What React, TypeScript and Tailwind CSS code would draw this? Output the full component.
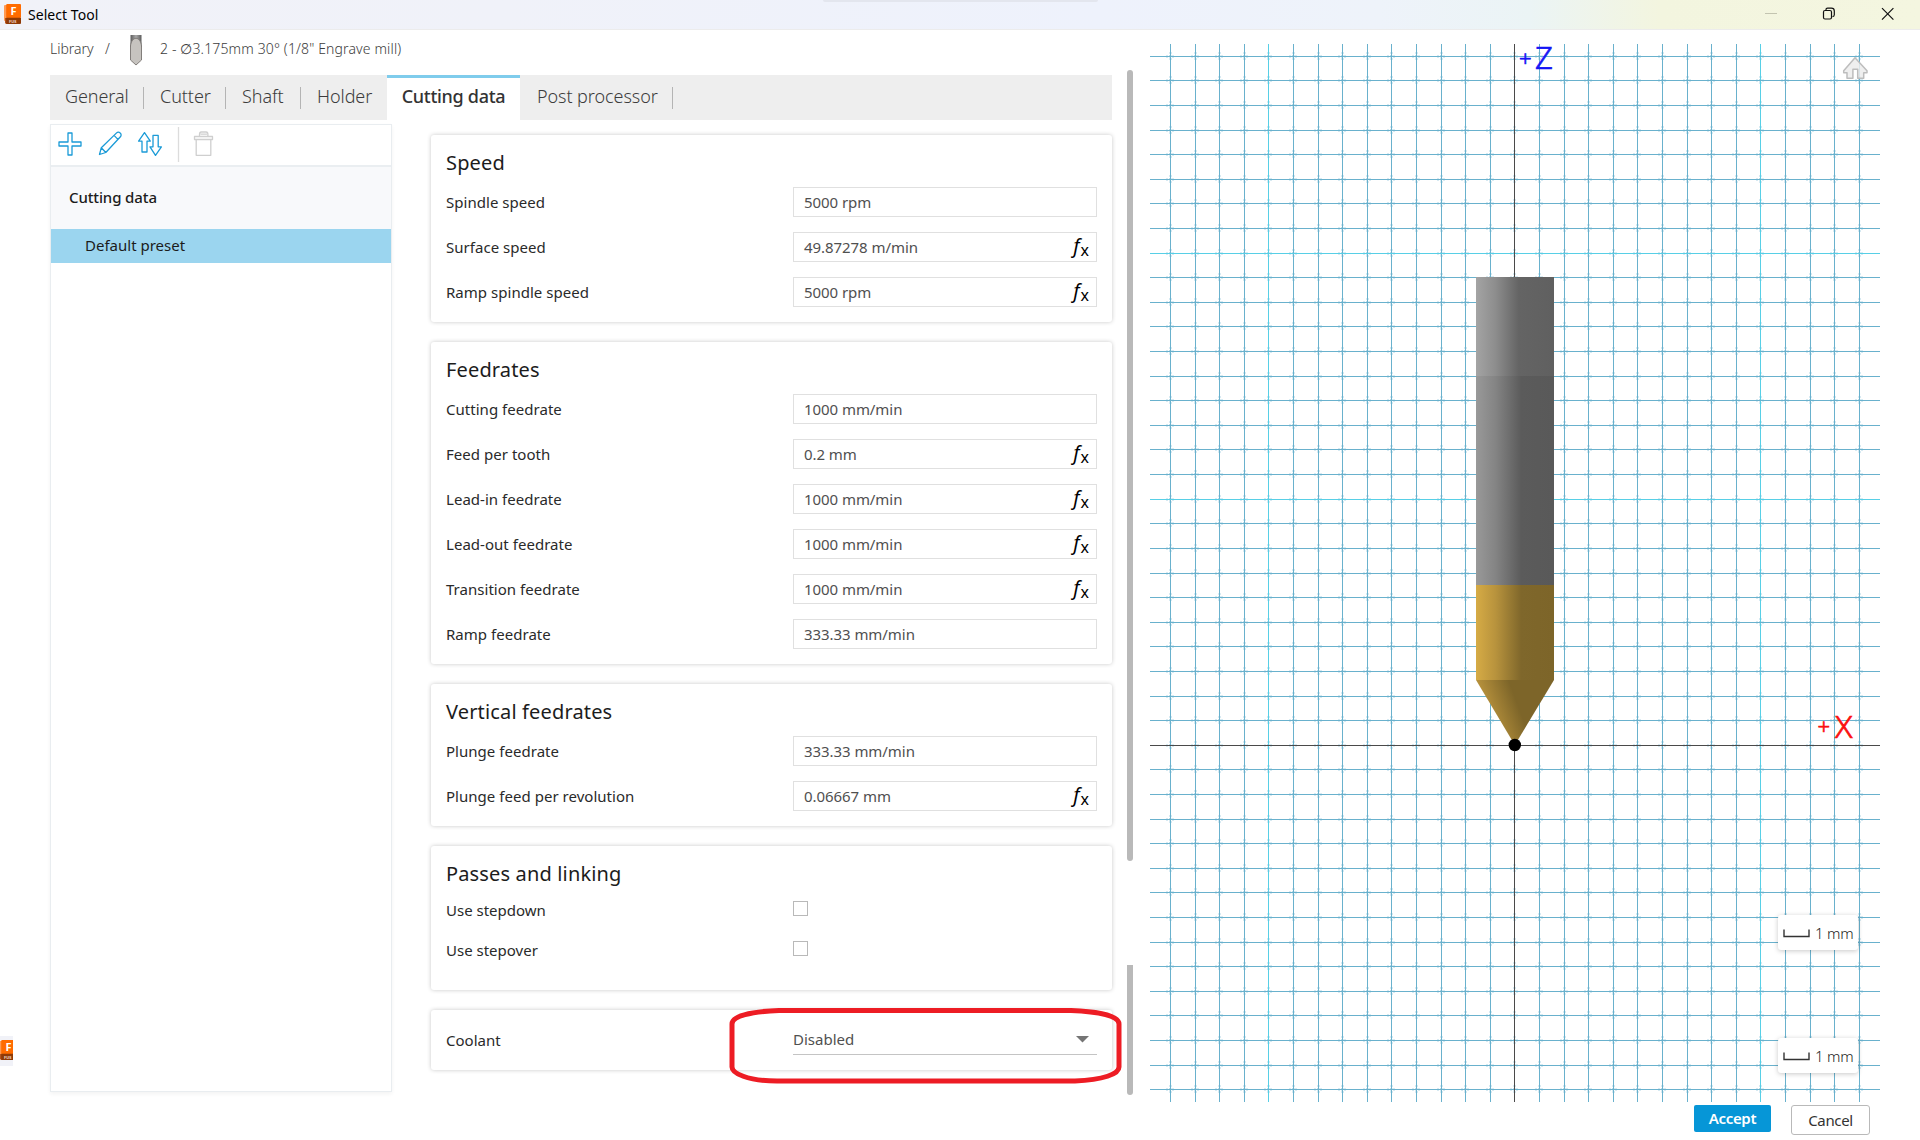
import React from 'react';

type Field = { label: string; value: string; fx?: boolean };

const speed: Field[] = [
  { label: 'Spindle speed', value: '5000 rpm' },
  { label: 'Surface speed', value: '49.87278 m/min', fx: true },
  { label: 'Ramp spindle speed', value: '5000 rpm', fx: true },
];

const feedrates: Field[] = [
  { label: 'Cutting feedrate', value: '1000 mm/min' },
  { label: 'Feed per tooth', value: '0.2 mm', fx: true },
  { label: 'Lead-in feedrate', value: '1000 mm/min', fx: true },
  { label: 'Lead-out feedrate', value: '1000 mm/min', fx: true },
  { label: 'Transition feedrate', value: '1000 mm/min', fx: true },
  { label: 'Ramp feedrate', value: '333.33 mm/min' },
];

const vertical: Field[] = [
  { label: 'Plunge feedrate', value: '333.33 mm/min' },
  { label: 'Plunge feed per revolution', value: '0.06667 mm', fx: true },
];

function Logo() {
  return (
    <svg width="18" height="20" viewBox="0 0 18 20" className="shrink-0">
      <rect x="0" y="1" width="6" height="16" rx="1" fill="#ff9a52" />
      <path d="M1 14h4v6H2l-1-1z" fill="#b5521a" />
      <rect x="2.2" y="0" width="14.8" height="14" rx="1" fill="#ff6b00" />
      <path d="M2.2 13.8H17V19a1 1 0 0 1-1 1H3.2a1 1 0 0 1-1-1z" fill="#8f3a06" />
      <text x="6.4" y="11.2" fontSize="11" fontWeight="700" fill="#fff" fontFamily="Noto Sans">F</text>
      <text x="5" y="18.6" fontSize="4" fontWeight="700" fill="#f0d8c8" fontFamily="Noto Sans">FUS</text>
    </svg>
  );
}

function TitleBar() {
  return (
    <header className="relative flex h-[30px] shrink-0 items-center bg-[linear-gradient(90deg,#f1f2f8_0px,#f0f2f9_500px,#eef2fc_1100px,#eef3fa_1380px,#ebf4f5_1530px,#f3f5df_1660px,#f4f6e0_1920px)] pl-1 shadow-[inset_0_-1px_0_#ececec]">
      <div className="-mt-[2px] flex">
        <Logo />
      </div>
      <span className="ml-[6px] text-sm tracking-[0.05px] text-black">Select Tool</span>
      <div className="absolute left-[823px] top-0 h-[2px] w-[275px] rounded-b bg-[#e3e6ee]" />
      <div className="-mt-[2px] ml-auto flex items-center pr-[26px]">
        <svg width="130" height="14" viewBox="0 0 130 14" fill="none">
          <path d="M1 6.5h12" stroke="#c3c4b0" />
          <rect x="59.5" y="3.5" width="8" height="8.5" rx="1.5" stroke="#111" strokeWidth="1.2" />
          <path d="M62 3.2V2.8C62 1.6 62.6 1.2 63.6 1.2h3.8c1.8 0 2.9 1 2.9 2.8v3.8c0 1-.6 1.8-1.8 1.8" stroke="#111" strokeWidth="1.2" />
          <path d="M118 1.2l11.4 11.4M129.4 1.2L118 12.6" stroke="#111" strokeWidth="1.2" />
        </svg>
      </div>
    </header>
  );
}

function Breadcrumb() {
  return (
    <div className="flex h-[45px] items-start text-sm font-light text-[#3c3c3c]">
      <span className="mt-[9px] w-[55px]">Library</span>
      <span className="mt-[9px] w-[24px]">/</span>
      <svg width="14" height="31" viewBox="0 0 14 31" className="mr-[17px] mt-[5px]">
        <defs>
          <linearGradient id="shank" x1="0" x2="1" y1="0" y2="0">
            <stop offset="0" stopColor="#5c5c5c" />
            <stop offset="0.5" stopColor="#a8a8a8" />
            <stop offset="1" stopColor="#5c5c5c" />
          </linearGradient>
        </defs>
        <path d="M1.5 0h11v12h-11z" fill="url(#shank)" />
        <path d="M1.5 25V11C2 6 4.500 3.300 7 3.300S12 6 12.500 11v14L7 30z" fill="#c6c3bf" stroke="#77736f" strokeWidth="0.9" />
      </svg>
      <span className="mt-[9px] tracking-[0.14px]">2 - ∅3.175mm 30° (1/8" Engrave mill)</span>
    </div>
  );
}

const tabStyles = 'flex h-full items-center pb-[3px] text-lg font-light tracking-[-0.07px] text-[#3c3c3c]';

function TabDivider() {
  return <span className="h-[22px] w-px shrink-0 bg-[#b4b4b4]" />;
}

function Tabs() {
  return (
    <nav className="flex h-[45px] items-center whitespace-nowrap bg-[#eeeeee]">
      <span className={`${tabStyles} w-[93px] pl-[15px]`}>General</span>
      <TabDivider />
      <span className={`${tabStyles} w-[81px] pl-4`}>Cutter</span>
      <TabDivider />
      <span className={`${tabStyles} w-[74px] pl-4`}>Shaft</span>
      <TabDivider />
      <span className={`${tabStyles} w-[86px] pl-4`}>Holder</span>
      <span className="flex h-full w-[133px] items-center justify-center border-t-[3px] border-[#7fccec] bg-white pb-[6px] text-lg font-medium tracking-[-0.3px] text-[#333]">
        Cutting data
      </span>
      <span className={`${tabStyles} w-[152px] pl-[17px]`}>Post processor</span>
      <TabDivider />
    </nav>
  );
}

function Toolbar() {
  return (
    <div className="flex h-[42px] items-center border-b-2 border-[#eaeef1] pl-[6px]">
      <svg width="168" height="36" viewBox="57 128 168 36" fill="none" stroke="#1b9bd7" strokeWidth="1.3" strokeLinejoin="round">
        <path d="M68 134h4v9h9v4h-9v9h-4v-9h-9v-4h9z" />
        <path d="M99.500 155.500l1.800-6.800L116.600 133.900a2.400 2.400 0 0 1 3.400 0l.4.4a2.400 2.400 0 0 1 0 3.400L105.800 153.500zM101.300 148.700l4.500 4.800M114 136.400l4.200 4.200" />
        <path d="M144.500 133.600l5.800 8.600h-3.300v10.800h-5v-10.800h-3.400z" />
        <path d="M153 136.400h5.200v11.400h3.200l-5.900 8.600-5.500-8.600h3z" />
        <path d="M178.500 128v35" stroke="#dcdcdc" />
        <g stroke="#cfcfcf" strokeWidth="1.3">
          <path d="M194.500 137.500h18v3h-18zM196.200 140.700v15.600h14.600v-15.600M199.500 137v-1.600c0-1.200.5-2.400 1.800-2.400h4.800c1.200 0 1.800 1.200 1.800 2.400v1.600M200.500 135.200h6.400" />
        </g>
      </svg>
    </div>
  );
}

function PresetPanel() {
  return (
    <aside className="mt-1 flex h-[968px] w-[342px] flex-col border border-[#e9edf0] bg-white shadow-[0_2px_4px_rgba(0,0,0,0.05)]">
      <Toolbar />
      <div className="flex h-[62px] items-center bg-[#f8f9fb] pb-[2px] pl-[18px] text-[15px] font-medium tracking-[-0.12px] text-[#1c1c1c]">
        Cutting data
      </div>
      <div className="flex h-[34px] items-center bg-[#9bd5ef] pb-[2px] pl-[34px] text-[15px] text-[#1c1c1c]">Default preset</div>
    </aside>
  );
}

const cardStyles = 'rounded-[3px] bg-white shadow-[0_0_4px_rgba(0,0,0,0.22)]';

function CardTitle({ children }: { children: React.ReactNode }) {
  return <h2 className="h-[52px] pt-[13px] text-xl leading-[30px] tracking-[0.15px] text-[#1c1c1c]">{children}</h2>;
}

function FieldCard({ title, fields }: { title: string; fields: Field[] }) {
  return (
    <section className={`${cardStyles} px-[15px] pb-[15px]`}>
      <CardTitle>{title}</CardTitle>
      <div className="flex flex-col gap-[15px]">
        {fields.map((f) => (
          <div key={f.label} className="flex h-[30px] items-center justify-between text-[15px]">
            <span className="tracking-[0.03px] text-[#2a2a2a]">{f.label}</span>
            <div className="flex h-full w-[304px] items-center justify-between border border-[#e0e0e0] pl-[10px] pr-[7px] tracking-[-0.06px] text-[#505050]">
              <span>{f.value}</span>
              {f.fx && (
                <span className="relative -top-px flex items-baseline leading-none text-black">
                  <span className="text-xl italic leading-none">f</span>
                  <span className="relative top-[3px] ml-px text-base leading-none">x</span>
                </span>
              )}
            </div>
          </div>
        ))}
      </div>
    </section>
  );
}

function CheckRow({ label }: { label: string }) {
  return (
    <div className="flex h-10 text-[15px]">
      <span className="-mt-px w-[347px] text-[#2a2a2a]">{label}</span>
      <span className="mt-px h-[15px] w-[15px] border border-[#b9b9b9] bg-white" />
    </div>
  );
}

function Settings() {
  return (
    <div className="ml-[39px] mt-[15px] flex w-[681px] flex-col gap-5">
      <FieldCard title="Speed" fields={speed} />
      <FieldCard title="Feedrates" fields={feedrates} />
      <FieldCard title="Vertical feedrates" fields={vertical} />
      <section className={`${cardStyles} h-[144px] px-[15px]`}>
        <CardTitle>Passes and linking</CardTitle>
        <div className="pt-[2px]">
          <CheckRow label="Use stepdown" />
          <CheckRow label="Use stepover" />
        </div>
      </section>
      <section className={`${cardStyles} relative flex h-[60px] items-center px-[15px] text-[15px]`}>
        <span className="w-[347px] text-[#2a2a2a]">Coolant</span>
        <div className="flex h-[30px] w-[304px] items-center justify-between border-b border-[#c4c4c4] pr-2 text-[#505050]">
          <span>Disabled</span>
          <svg width="13" height="7" viewBox="0 0 13 7">
            <path d="M0 0h13L6.500 6.500z" fill="#757575" />
          </svg>
        </div>
        <svg className="absolute -top-[3px] left-[298px]" width="393" height="78" viewBox="0 0 393 78" fill="none">
          <path
            d="M50 3.500H342C370 4.500 390 9 390 17V60C390 67 374 73 346 74H48C18 74 3 66 3 60V17C3 9 22 4.500 50 3.500z"
            stroke="#ed1c24"
            strokeWidth="5"
          />
        </svg>
      </section>
    </div>
  );
}

const STEP = 24.61;
const columns = Array.from({ length: 29 }, (_, i) => ({ k: i - 14, x: Math.round(1514.45 + (i - 14) * 24.6) - 1150 }));
const rows = Array.from({ length: 43 }, (_, i) => ({ k: i - 28, y: Math.round(744.78 + (i - 28) * STEP) - 44 }));
const ticks = rows
  .flatMap((r) => columns.map((c) => `M${c.x - 4} ${r.y - 0.5}h9M${c.x - 4} ${r.y + 1.5}h9M${c.x - 0.5} ${r.y - 4}v9M${c.x + 1.5} ${r.y - 4}v9`))
  .join('');

function ScaleChip() {
  return (
    <div className="flex h-[35px] w-20 items-center whitespace-nowrap rounded-[3px] bg-white pl-[5px] pt-[2px] text-[15px] font-light tracking-[-0.2px] text-[#222] shadow-[0_1px_5px_rgba(0,0,0,0.22)]">
      <svg width="27" height="9" viewBox="0 0 27 9" className="mr-[5px] shrink-0" fill="none">
        <path d="M1 0.500v7h25v-7" stroke="#333" strokeWidth="1.400" />
      </svg>
      1 mm
    </div>
  );
}

function Viewport() {
  return (
    <div className="relative h-[1058px] w-[730px]">
      <svg width="730" height="1058" viewBox="0 0 730 1058" className="overflow-visible">
        <defs>
          <linearGradient id="steel" x1="0" x2="1" y1="0" y2="0">
            <stop offset="0" stopColor="#a4a4a4" />
            <stop offset="0.25" stopColor="#8d8d8d" />
            <stop offset="0.55" stopColor="#646464" />
            <stop offset="1" stopColor="#606060" />
          </linearGradient>
          <linearGradient id="steelDark" x1="0" x2="1" y1="0" y2="0">
            <stop offset="0" stopColor="#999999" />
            <stop offset="0.25" stopColor="#848484" />
            <stop offset="0.58" stopColor="#5b5b5b" />
            <stop offset="1" stopColor="#595959" />
          </linearGradient>
          <linearGradient id="brass" x1="0" x2="1" y1="0" y2="0">
            <stop offset="0" stopColor="#d6ab45" />
            <stop offset="0.25" stopColor="#b8933d" />
            <stop offset="0.58" stopColor="#7f672b" />
            <stop offset="1" stopColor="#7d6529" />
          </linearGradient>
          <linearGradient id="cone" gradientUnits="userSpaceOnUse" x1="333" y1="650" x2="360" y2="640">
            <stop offset="0" stopColor="#b48f3b" />
            <stop offset="1" stopColor="#7d6529" />
          </linearGradient>
        </defs>
        <path d={ticks} stroke="#6fb4d0" strokeOpacity="0.28" strokeDasharray="2 1" />
        <g shapeRendering="crispEdges">
          {columns.map(({ k, x }) => (
            <rect key={k} x={x} y="0" width="1" height="1058" fill={Math.abs(k) === 10 ? '#57cfe6' : '#69b1cd'} />
          ))}
          {rows.map(({ k, y }) => (
            <rect key={k} x="0" y={y} width="730" height="1" fill={k === -20 || k === -10 ? '#57cfe6' : '#69b1cd'} />
          ))}
          <rect x="364" y="0" width="1" height="1058" fill="#4a4a4a" />
          <rect x="0" y="701" width="730" height="1" fill="#4a4a4a" />
        </g>
        <rect x="326" y="233" width="78" height="99" fill="url(#steel)" />
        <rect x="326" y="332" width="78" height="209" fill="url(#steelDark)" />
        <rect x="326" y="541" width="78" height="95" fill="url(#brass)" />
        <path d="M326 636H404L364.800 701z" fill="url(#cone)" />
        <circle cx="364.800" cy="701" r="6.200" fill="#000" />
        <g fontFamily="Noto Sans" fontWeight="300">
          <g fill="#1414f5" stroke="#1414f5" strokeWidth="0.7">
            <text x="369" y="22.500" fontSize="22">+</text>
            <text x="385" y="25.300" fontSize="31">Z</text>
          </g>
          <g fill="#fb1010" stroke="#fb1010" strokeWidth="0.7">
            <text x="667.500" y="690.500" fontSize="22">+</text>
            <text x="685" y="693.800" fontSize="32">X</text>
          </g>
        </g>
        <path
          d="M705 13.700L717 26.700v2h-3.300V34.200h-6V25.300h-4.800v8.900H697V28.700h-3.300v-2z"
          fill="#ececec"
          fillOpacity="0.850"
          stroke="#bdbdbd"
          strokeWidth="1.500"
          strokeLinejoin="round"
        />
      </svg>
      <div className="absolute left-[628px] top-[871px] flex flex-col gap-[88px]">
        <ScaleChip />
        <ScaleChip />
      </div>
    </div>
  );
}

export default function App() {
  return (
    <div className="relative flex h-[1140px] w-[1920px] flex-col overflow-hidden bg-white font-['Noto_Sans',sans-serif]">
      <TitleBar />
      <div className="flex flex-1">
        <main className="ml-[50px] w-[1062px]">
          <Breadcrumb />
          <Tabs />
          <div className="flex">
            <PresetPanel />
            <Settings />
          </div>
        </main>
        <div className="ml-[15px] flex w-[6px] flex-col gap-[104px] pt-10">
          <div className="h-[791px] rounded-t-full rounded-b-full bg-[#b9b9b9]" />
          <div className="h-[130px] rounded-b-full bg-[#b9b9b9]" />
        </div>
        <div className="ml-[17px] w-[730px] pt-[14px]">
          <Viewport />
          <div className="flex items-start justify-end gap-5 pr-[10px] pt-[3px] text-[15px]">
            <button className="h-[27px] w-[77px] rounded-[2px] bg-[#0696d7] font-semibold leading-[27px] tracking-[-0.35px] text-white">Accept</button>
            <button className="h-[30px] w-[79px] rounded-[3px] border border-[#b9b9b9] bg-white leading-[28px] tracking-[-0.35px] text-[#333]">Cancel</button>
          </div>
        </div>
      </div>
      <div className="absolute left-0 top-[1036px] flex h-[30px] w-[13px] items-start overflow-hidden bg-[#f1f2f8] pt-1">
        <div className="-ml-px flex">
          <Logo />
        </div>
      </div>
    </div>
  );
}
